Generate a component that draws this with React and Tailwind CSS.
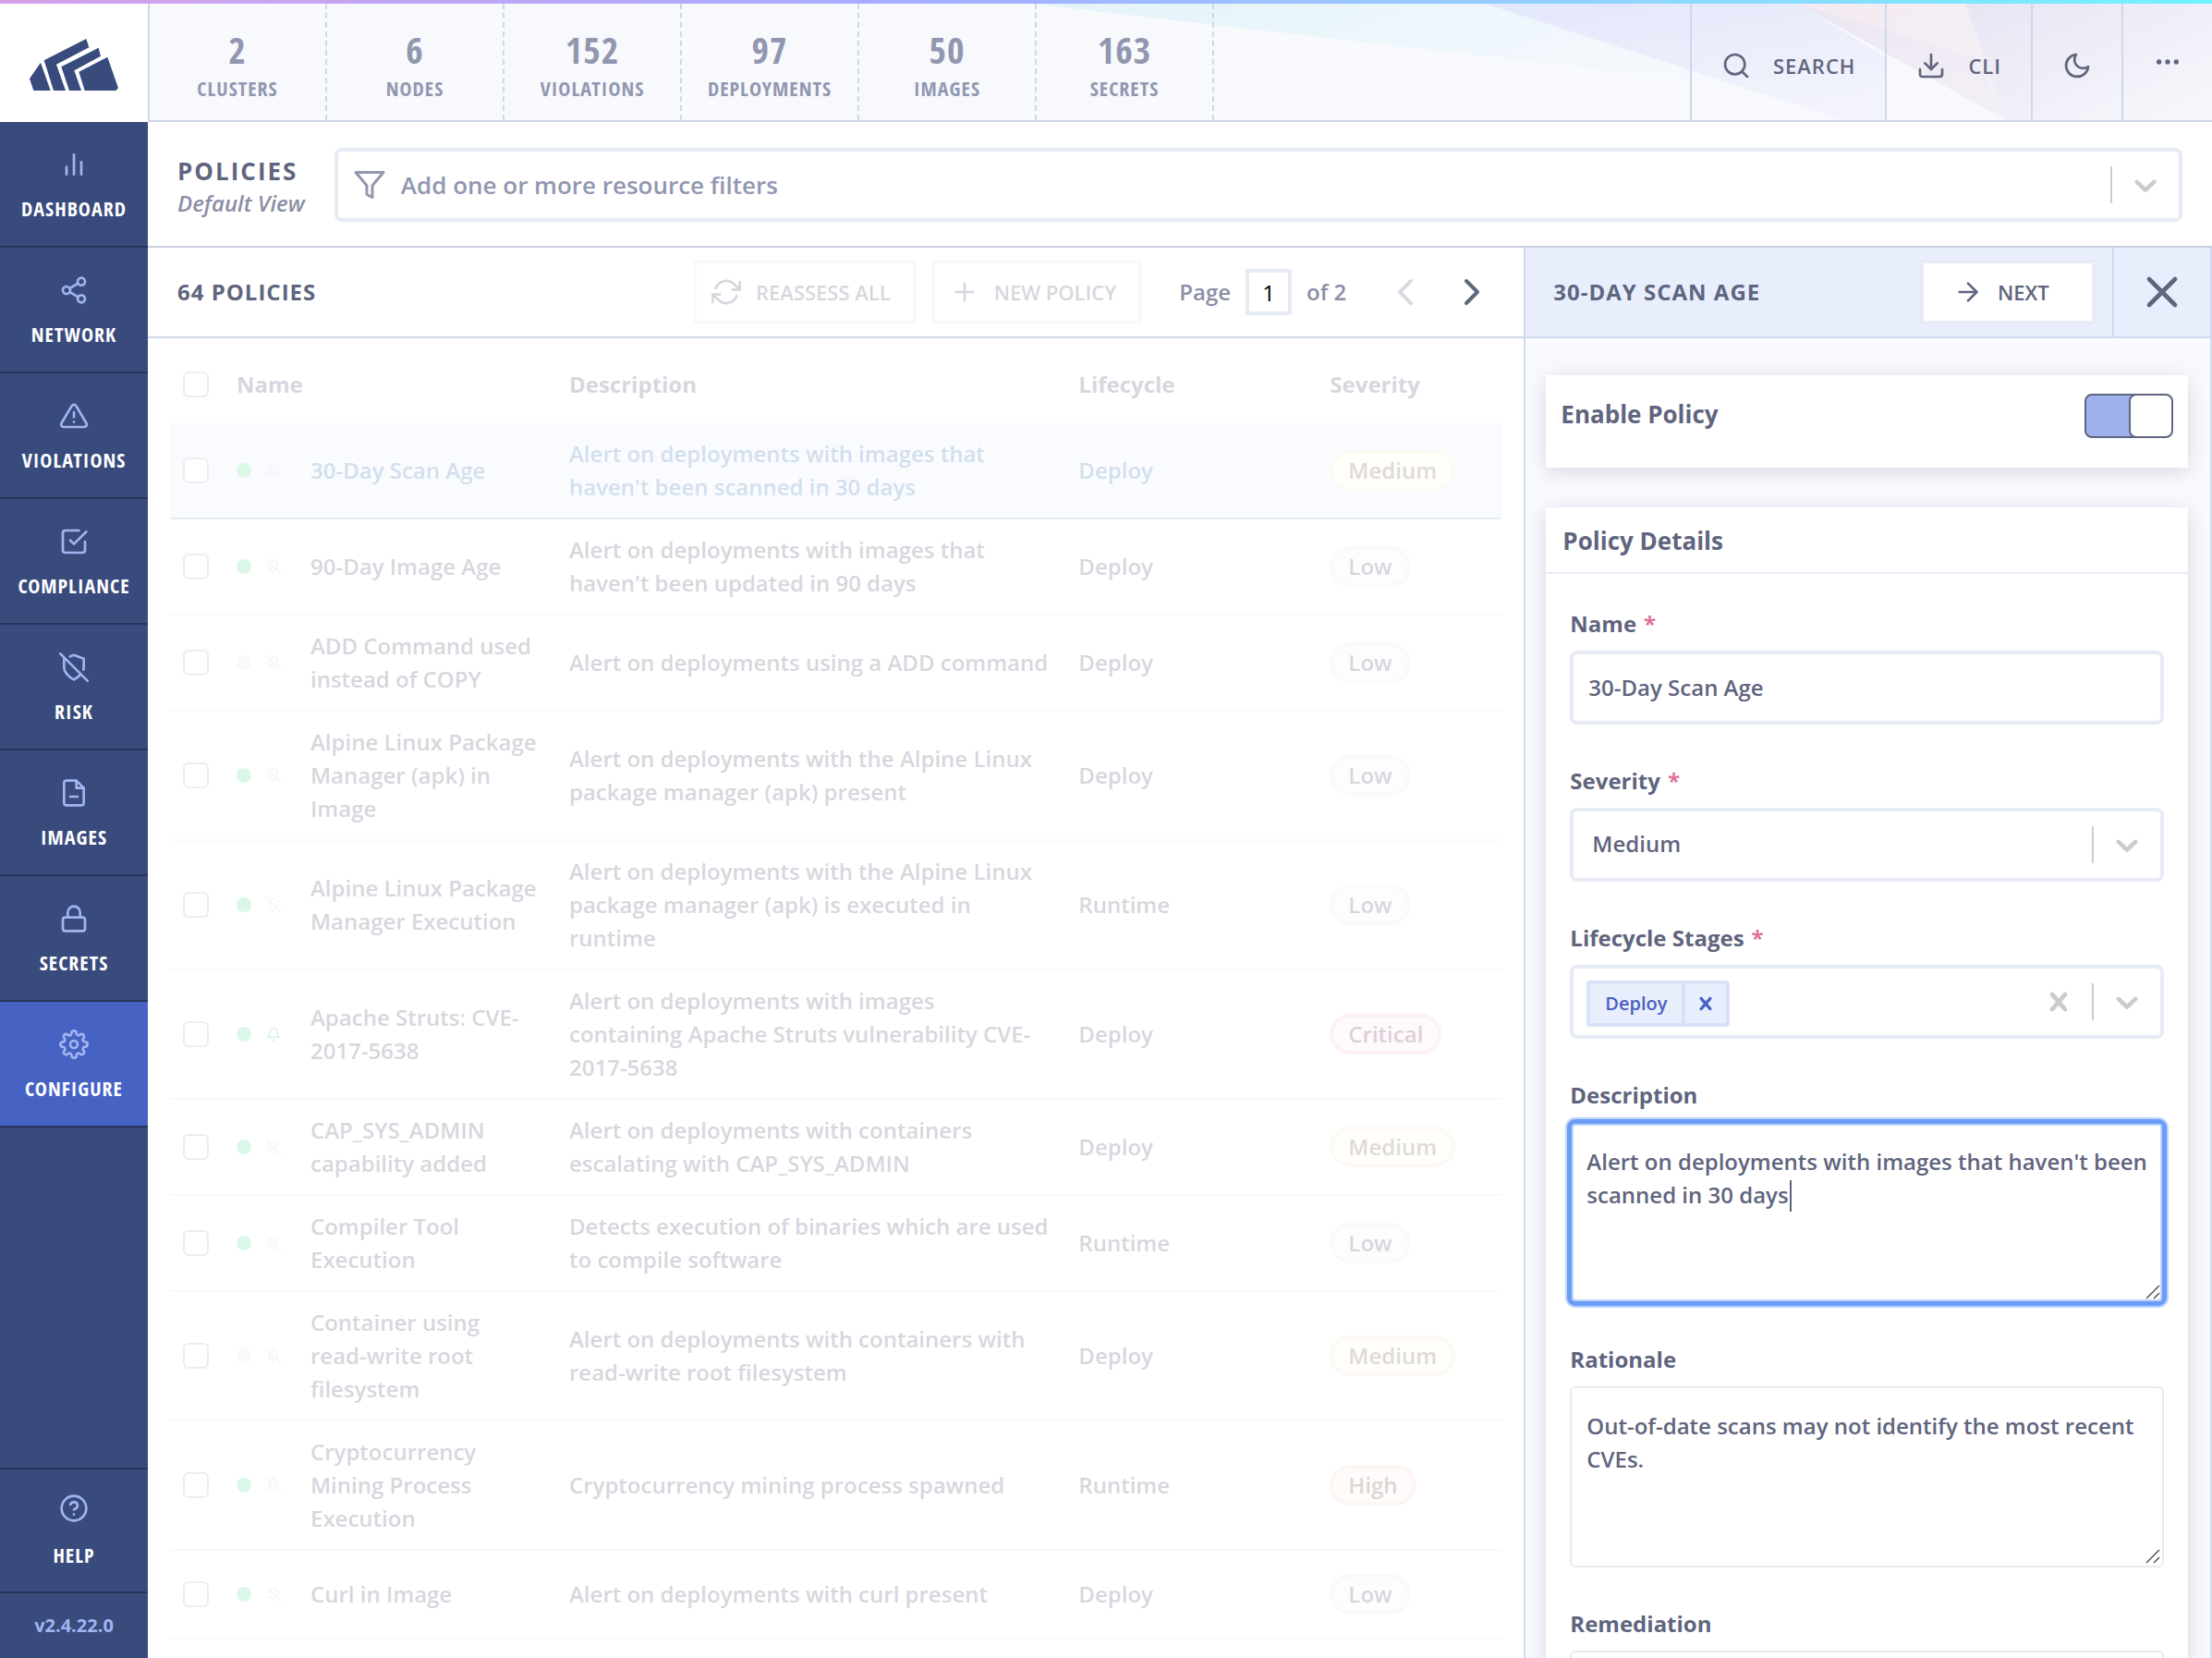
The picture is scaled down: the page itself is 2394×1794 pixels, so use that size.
import { useState } from "react";
import {
  FiAlertTriangle, FiArrowRight, FiBarChart2, FiBell, FiBellOff, FiCheckSquare,
  FiChevronLeft, FiChevronRight, FiDownload, FiFileMinus, FiFilter, FiHelpCircle,
  FiLock, FiMoon, FiMoreHorizontal, FiPlus, FiRefreshCw, FiSearch, FiSettings,
  FiShare2, FiShieldOff, FiX
} from "react-icons/fi";
import clsx from "clsx";

const STATS = [
  { value: 2, label: "Clusters" },
  { value: 6, label: "Nodes" },
  { value: 152, label: "Violations" },
  { value: 97, label: "Deployments" },
  { value: 50, label: "Images" },
  { value: 163, label: "Secrets" }
];

const NAV = [
  { label: "Dashboard", icon: FiBarChart2 },
  { label: "Network", icon: FiShare2 },
  { label: "Violations", icon: FiAlertTriangle },
  { label: "Compliance", icon: FiCheckSquare },
  { label: "Risk", icon: FiShieldOff },
  { label: "Images", icon: FiFileMinus },
  { label: "Secrets", icon: FiLock },
  { label: "Configure", icon: FiSettings, active: true }
];

const POLICIES = [
  { name: "30-Day Scan Age", description: "Alert on deployments with images that haven't been scanned in 30 days", lifecycle: "Deploy", severity: "Medium", enabled: true, selected: true },
  { name: "90-Day Image Age", description: "Alert on deployments with images that haven't been updated in 90 days", lifecycle: "Deploy", severity: "Low", enabled: true },
  { name: "ADD Command used instead of COPY", description: "Alert on deployments using a ADD command", lifecycle: "Deploy", severity: "Low", enabled: false },
  { name: "Alpine Linux Package Manager (apk) in Image", description: "Alert on deployments with the Alpine Linux package manager (apk) present", lifecycle: "Deploy", severity: "Low", enabled: true },
  { name: "Alpine Linux Package Manager Execution", description: "Alert on deployments with the Alpine Linux package manager (apk) is executed in runtime", lifecycle: "Runtime", severity: "Low", enabled: true },
  { name: "Apache Struts: CVE-2017-5638", description: "Alert on deployments with images containing Apache Struts vulnerability CVE-2017-5638", lifecycle: "Deploy", severity: "Critical", enabled: true, notify: true },
  { name: "CAP_SYS_ADMIN capability added", description: "Alert on deployments with containers escalating with CAP_SYS_ADMIN", lifecycle: "Deploy", severity: "Medium", enabled: true },
  { name: "Compiler Tool Execution", description: "Detects execution of binaries which are used to compile software", lifecycle: "Runtime", severity: "Low", enabled: true },
  { name: "Container using read-write root filesystem", description: "Alert on deployments with containers with read-write root filesystem", lifecycle: "Deploy", severity: "Medium", enabled: false },
  { name: "Cryptocurrency Mining Process Execution", description: "Cryptocurrency mining process spawned", lifecycle: "Runtime", severity: "High", enabled: true },
  { name: "Curl in Image", description: "Alert on deployments with curl present", lifecycle: "Deploy", severity: "Low", enabled: true }
];

const SEVERITY_STYLES = {
  Low: "bg-[#f9f9fc] border-[#efeff3] text-[#5f657e]",
  Medium: "bg-[#fffcf0] border-[#f9ecd6] text-[#7f7454]",
  High: "bg-[#fdf0ec] border-[#f9dcd2] text-[#7f5b57]",
  Critical: "bg-[#fdecf4] border-[#fbcadb] text-[#7f4367]"
};

const fieldBox = "flex h-20 items-center rounded-lg border-4 border-[#e7ebf6] bg-white";

function Logo() {
  return (
    <svg className="h-14 w-24 fill-[#394b7d]" viewBox="96 126 288 168" aria-label="Home">
      <path d="M132 203 164 294H109L96 255Z" />
      <path d="M143 196 280 126 289 154 183 209 213 294H174Z" />
      <path d="M199 217 320 155 327 182 241 229 264 294H225Z" />
      <path d="M256 233 349 185 384 286 376 294H275Z" />
    </svg>
  );
}

function HeaderBackdrop() {
  return (
    <svg className="absolute top-0 right-0 h-full w-[1280px]" viewBox="1114 4 1280 126" preserveAspectRatio="none" aria-hidden="true">
      <defs>
        <linearGradient id="sky" x1="0" x2="1" y1="0" y2="0.3">
          <stop offset="0" stopColor="#e2f4f9" />
          <stop offset="1" stopColor="#f5f8fd" />
        </linearGradient>
        <linearGradient id="lavender" x1="0" x2="0.6" y1="0" y2="1">
          <stop offset="0" stopColor="#e2e7fa" />
          <stop offset="1" stopColor="#f2f3fc" />
        </linearGradient>
        <linearGradient id="rose" x1="0" x2="1" y1="0" y2="1">
          <stop offset="0" stopColor="#f5eaf1" />
          <stop offset="1" stopColor="#f3f1f8" />
        </linearGradient>
        <linearGradient id="mauve" x1="0" x2="1" y1="0" y2="1">
          <stop offset="0" stopColor="#ebe5f1" />
          <stop offset="1" stopColor="#f4f0f7" />
        </linearGradient>
        <linearGradient id="dusk" x1="0" x2="1" y1="0" y2="1">
          <stop offset="0" stopColor="#e8e5f3" />
          <stop offset="1" stopColor="#f7f8fd" />
        </linearGradient>
      </defs>
      <path d="M1117 4H1608L1880 92Z" fill="url(#sky)" />
      <path d="M1608 4H1946L2041 62V130H1995Z" fill="url(#lavender)" />
      <path d="M1946 4H2127L2171 130Z" fill="url(#rose)" />
      <path d="M1946 4 2137 62 2171 130Z" fill="url(#mauve)" />
      <path d="M2127 4H2394V130H2171Z" fill="url(#dusk)" />
    </svg>
  );
}

function SelectChevron() {
  return (
    <svg className="h-10 w-10 fill-[#cccccc]" viewBox="0 0 20 20" aria-hidden="true">
      <path d="M4.516 7.548c0.436-0.446 1.043-0.481 1.576 0l3.908 3.747 3.908-3.747c0.533-0.481 1.141-0.446 1.574 0 0.436 0.445 0.408 1.197 0 1.615-0.406 0.418-4.695 4.502-4.695 4.502-0.217 0.223-0.502 0.335-0.787 0.335s-0.57-0.112-0.789-0.335c0 0-4.287-4.084-4.695-4.502s-0.436-1.17 0-1.615z" />
    </svg>
  );
}

function SelectCross({ className }) {
  return (
    <svg className={className} viewBox="0 0 20 20" aria-hidden="true">
      <path d="M14.348 14.849c-0.469 0.469-1.229 0.469-1.697 0l-2.651-3.030-2.651 3.029c-0.469 0.469-1.229 0.469-1.697 0-0.469-0.469-0.469-1.229 0-1.697l2.758-3.15-2.759-3.152c-0.469-0.469-0.469-1.228 0-1.697s1.228-0.469 1.697 0l2.652 3.031 2.651-3.031c0.469-0.469 1.228-0.469 1.697 0s0.469 1.229 0 1.697l-2.758 3.152 2.758 3.15c0.469 0.469 0.469 1.229 0 1.698z" />
    </svg>
  );
}

function SelectIndicator() {
  return (
    <div className="flex items-center">
      <span className="h-10 w-0.5 bg-[#cccccc]" />
      <span className="px-4"><SelectChevron /></span>
    </div>
  );
}

function TopBar() {
  return (
    <header className="relative flex h-32 shrink-0 border-b-2 border-l-2 border-[#d0d7e8] bg-[#f7f9fd]">
      <HeaderBackdrop />
      <ul className="relative flex flex-1 font-['Open_Sans_Condensed','Open_Sans',sans-serif] font-bold text-[#9297b0] uppercase">
        {STATS.map((stat) => (
          <li key={stat.label} className="flex w-48 flex-col items-center justify-center border-r-2 border-dashed border-[#d0d7e8] pt-2">
            <span className="text-[40px] leading-[48px] tracking-[1px]">{stat.value}</span>
            <span className="text-[22px] leading-[34px] tracking-[1px]">{stat.label}</span>
          </li>
        ))}
      </ul>
      <div className="relative flex text-[22px] tracking-[1px] text-[#5f657e]">
        <button className="flex items-center gap-6 border-l-2 border-[#cdd8ec] px-8 pt-2">
          <FiSearch size={32} /> SEARCH
        </button>
        <button className="flex items-center gap-6 border-l-2 border-[#cdd8ec] px-8 pt-2">
          <FiDownload size={32} /> CLI
        </button>
        <button className="flex items-center border-l-2 border-[#cdd8ec] px-8 pt-2" aria-label="Toggle dark mode">
          <FiMoon size={32} />
        </button>
        <button className="flex items-center border-l-2 border-[#cdd8ec] px-8" aria-label="More options">
          <FiMoreHorizontal size={32} />
        </button>
      </div>
    </header>
  );
}

function Sidebar() {
  return (
    <nav className="flex flex-1 flex-col bg-[#394b7d] font-['Open_Sans_Condensed','Open_Sans',sans-serif] text-[22px] leading-8 font-bold tracking-[1px] text-white uppercase">
      {NAV.map(({ label, icon: Icon, active }) => (
        <a
          key={label}
          href="#"
          className={clsx(
            "flex h-[136px] w-full shrink-0 flex-col items-center gap-[15px] border-b-2 border-[#28345b] pt-[30px]",
            active && "bg-[#4663c4]"
          )}
        >
          <Icon size={32} className="text-[#a3b4f0]" />
          {label}
        </a>
      ))}
      <a href="#" className="mt-auto flex h-[136px] flex-col items-center gap-[18px] border-y-2 border-[#28345b] pt-[26px]">
        <FiHelpCircle size={32} className="text-[#a3b4f0]" />
        Help
      </a>
      <span className="flex h-[70px] items-center justify-center font-['Open_Sans',sans-serif] text-[20px] tracking-normal text-[#a3b4f0] normal-case">
        v2.4.22.0
      </span>
    </nav>
  );
}

function FilterBar() {
  return (
    <div className="flex h-[136px] shrink-0 items-center gap-8 border-b-2 border-[#c9cfe1] bg-white px-8 pt-0.5">
      <div className="pt-1">
        <h1 className="text-[26px] leading-9 font-bold tracking-[2px] text-[#5f657e]">POLICIES</h1>
        <p className="text-2xl leading-[34px] text-[#8a8fa5] italic">Default View</p>
      </div>
      <div className={clsx(fieldBox, "flex-1 pl-4")}>
        <FiFilter size={36} className="text-[#9297b0]" />
        <input
          type="text"
          aria-label="Resource filters"
          placeholder="Add one or more resource filters"
          className="ml-4 h-full flex-1 text-[26px] outline-none placeholder:text-[#9297b0]"
        />
        <SelectIndicator />
      </div>
    </div>
  );
}

function PoliciesToolbar() {
  return (
    <div className="flex h-[98px] shrink-0 items-center border-b-2 border-[#d0d7e8] bg-white px-8">
      <h2 className="flex-1 text-2xl font-bold tracking-[1px] text-[#5f657e]">64 POLICIES</h2>
      <div className="flex gap-4 text-[22px] text-[#5f657e] opacity-25">
        <button disabled className="flex h-[70px] items-center gap-4 border-4 border-[#e7ebf6] pr-6 pl-4">
          <FiRefreshCw size={32} /> REASSESS ALL
        </button>
        <button disabled className="flex h-[70px] items-center gap-4 border-4 border-[#e7ebf6] pr-6 pl-4">
          <FiPlus size={32} /> NEW POLICY
        </button>
      </div>
      <label className="ml-10 flex items-center gap-4 text-2xl text-[#8a8fa5]">
        Page
        <input type="text" defaultValue="1" className="h-[50px] w-[50px] border-4 border-[#e7ebf6] bg-white text-center font-normal text-black" />
        of 2
      </label>
      <button disabled className="ml-10 text-[#d8d9e0]" aria-label="Previous page"><FiChevronLeft size={48} /></button>
      <button className="ml-6 text-[#5f657e]" aria-label="Next page"><FiChevronRight size={48} /></button>
    </div>
  );
}

function Checkbox({ label }) {
  return (
    <input type="checkbox" aria-label={label} className="block h-7 w-7 appearance-none rounded-md border-2 border-[#b8b9c2] bg-white" />
  );
}

function PoliciesTable() {
  return (
    <div className="min-h-0 flex-1 overflow-hidden bg-white px-6">
      <table className="w-full table-fixed text-left text-2xl leading-9 text-[#5f657e] opacity-25">
        <colgroup>
          <col className="w-14" />
          <col className="w-90" />
          <col />
          <col className="w-68" />
          <col className="w-[202px]" />
        </colgroup>
        <thead>
          <tr className="h-[92px] font-bold">
            <th className="pt-2 pl-3.5"><Checkbox label="Select all policies" /></th>
            <th className="px-4 pt-2">Name</th>
            <th className="px-4 pt-2">Description</th>
            <th className="px-4 pt-2">Lifecycle</th>
            <th className="px-4 pt-2">Severity</th>
          </tr>
        </thead>
        <tbody>
          {POLICIES.map((policy) => (
            <tr
              key={policy.name}
              className={clsx(
                "h-24 border-b-2",
                policy.selected ? "border-[#93b9dc] bg-[#ebf3ff] text-[#4f83b8]" : "border-[#e8e9ef]"
              )}
            >
              <td className="pl-3.5"><Checkbox label={`Select ${policy.name}`} /></td>
              <td className="px-4 py-[15px]">
                <div className="flex items-center">
                  <span className={clsx("h-4 w-4 shrink-0 rounded-full", policy.enabled ? "bg-[#73e3a3]" : "bg-[#e7eaf2]")} />
                  {policy.notify
                    ? <FiBell size={16} className="mx-4 shrink-0 text-[#3fc990]" />
                    : <FiBellOff size={16} className="mx-4 shrink-0 text-[#d3d6e4]" />}
                  <span className="ml-4">{policy.name}</span>
                </div>
              </td>
              <td className="py-[15px] pr-3.5 pl-4">{policy.description}</td>
              <td className="px-4">{policy.lifecycle}</td>
              <td className="px-4">
                <span className={clsx("inline-flex h-11 items-center rounded-full border-4 px-4", SEVERITY_STYLES[policy.severity])}>
                  {policy.severity}
                </span>
              </td>
            </tr>
          ))}
        </tbody>
      </table>
    </div>
  );
}

function Field({ id, label, required, children }) {
  return (
    <div className="mb-[43px]">
      <label htmlFor={id} className="mb-[11px] block text-2xl leading-9 font-bold">
        {label}
        {required && <span className="ml-2 text-[#e0719c]">*</span>}
      </label>
      {children}
    </div>
  );
}

function TextArea({ id, value, focused }) {
  const [text, setText] = useState(value);

  return (
    <div className="relative">
      <textarea
        id={id}
        value={text}
        onChange={(e) => setText(e.target.value)}
        className={clsx(
          "block h-[196px] w-full resize-none rounded-md border-2 bg-white py-[23px] pr-2 pl-4 text-2xl leading-9 outline-none",
          focused
            ? "border-[#6a9df6] shadow-[inset_0_0_0_2px_#bcd3fb,0_0_0_3px_#6a9df6,0_0_0_5px_#bcd3fb]"
            : "border-[#e7eaf0]"
        )}
      />
      {focused && <span className="absolute top-[63px] left-[238px] h-[34px] w-0.5 bg-[#5f657e]" />}
      <svg className="pointer-events-none absolute right-1 bottom-1 h-4 w-4 stroke-[#555555]" viewBox="0 0 16 16" aria-hidden="true">
        <path d="M1 15 15 1M9 15 15 9" strokeWidth="1.5" />
      </svg>
    </div>
  );
}

function PolicyPanel() {
  const [enabled, setEnabled] = useState(true);
  const card = "bg-white shadow-[0_4px_20px_rgba(60,65,90,0.18)]";

  return (
    <section className="flex w-1/3 shrink-0 flex-col border-x-2 border-[#d0d9ee] text-[#5f657e]">
      <div className="flex h-[98px] shrink-0 items-center border-b-2 border-[#d0d9ee] bg-[#e9eefd] pl-[30px]">
        <h2 className="flex-1 text-2xl font-bold tracking-[1px]">30-DAY SCAN AGE</h2>
        <button className="flex h-[70px] w-[190px] items-center gap-4 border-4 border-[#e7ebf6] bg-white pl-8 text-[22px]">
          <FiArrowRight size={32} /> NEXT
        </button>
        <button className="ml-[18px] flex h-full items-center border-l-2 border-[#d0d9ee] px-6" aria-label="Close panel">
          <FiX size={56} />
        </button>
      </div>

      <div className="min-h-0 flex-1 overflow-hidden bg-[#f9fafe] pt-10 pr-6 pl-[22px]">
        <div className={clsx(card, "flex h-[100px] justify-between px-4 pt-5")}>
          <label htmlFor="enable-policy" className="text-[26px] leading-[44px] font-bold">Enable Policy</label>
          <span className="relative flex h-12 w-24 justify-end overflow-hidden rounded-lg border-2 border-[#5f657e] bg-[#9fb1ec]">
            <input
              id="enable-policy"
              type="checkbox"
              checked={enabled}
              onChange={(e) => setEnabled(e.target.checked)}
              className="absolute inset-0 appearance-none"
            />
            <span className="-my-0.5 -mr-0.5 w-12 rounded-lg border-2 border-[#5f657e] bg-white" />
          </span>
        </div>

        <div className={clsx(card, "mt-[43px]")}>
          <h3 className="h-[72px] border-b-2 border-[#e7ebf6] px-[18px] py-4 text-[26px] leading-10 font-bold">Policy Details</h3>
          <form className="px-[26px] pt-9">
            <Field id="name" label="Name" required>
              <div className={fieldBox}>
                <input id="name" type="text" defaultValue="30-Day Scan Age" className="h-full w-full px-4 pb-0.5 text-2xl outline-none" />
              </div>
            </Field>
            <Field id="severity" label="Severity" required>
              <div className={fieldBox}>
                <select id="severity" defaultValue="Medium" className="h-full flex-1 appearance-none px-5 pb-0.5 text-2xl outline-none">
                  <option>Low</option>
                  <option>Medium</option>
                  <option>High</option>
                  <option>Critical</option>
                </select>
                <SelectIndicator />
              </div>
            </Field>
            <Field id="lifecycle" label="Lifecycle Stages" required>
              <div className={fieldBox}>
                <div className="mt-1 ml-3.5 flex h-[50px] items-stretch rounded-sm border-4 border-[#d9e1f9] bg-[#e9eefd] text-[20px] text-[#4a61bd]">
                  <span className="flex items-center px-4">Deploy</span>
                  <button type="button" aria-label="Remove Deploy" className="flex items-center border-l-4 border-[#d9e1f9] px-2">
                    <SelectCross className="h-7 w-7 fill-[#4663c4]" />
                  </button>
                </div>
                <input id="lifecycle" type="text" className="h-full min-w-0 flex-1 px-2 text-2xl outline-none" />
                <button type="button" aria-label="Clear all" className="px-4">
                  <SelectCross className="h-10 w-10 fill-[#cccccc]" />
                </button>
                <SelectIndicator />
              </div>
            </Field>
            <Field id="description" label="Description">
              <TextArea id="description" focused value="Alert on deployments with images that haven't been scanned in 30 days" />
            </Field>
            <Field id="rationale" label="Rationale">
              <TextArea id="rationale" value="Out-of-date scans may not identify the most recent CVEs." />
            </Field>
            <Field id="remediation" label="Remediation">
              <TextArea id="remediation" value="" />
            </Field>
          </form>
        </div>
      </div>
    </section>
  );
}

export default function App() {
  return (
    <div className="flex h-screen flex-col overflow-hidden bg-white font-['Open_Sans',sans-serif] font-semibold">
      <div className="h-1 shrink-0 bg-linear-to-r from-[#d6a1ea] via-[#a6acff] via-40% to-[#6ff3ff]" />
      <div className="flex min-h-0 flex-1">
        <div className="flex w-40 shrink-0 flex-col">
          <a href="#" className="flex h-32 shrink-0 items-center justify-center pt-1"><Logo /></a>
          <Sidebar />
        </div>
        <div className="flex min-w-0 flex-1 flex-col">
          <TopBar />
          <FilterBar />
          <main className="flex min-h-0 flex-1">
            <section className="flex min-w-0 flex-1 flex-col">
              <PoliciesToolbar />
              <PoliciesTable />
            </section>
            <PolicyPanel />
          </main>
        </div>
      </div>
    </div>
  );
}
